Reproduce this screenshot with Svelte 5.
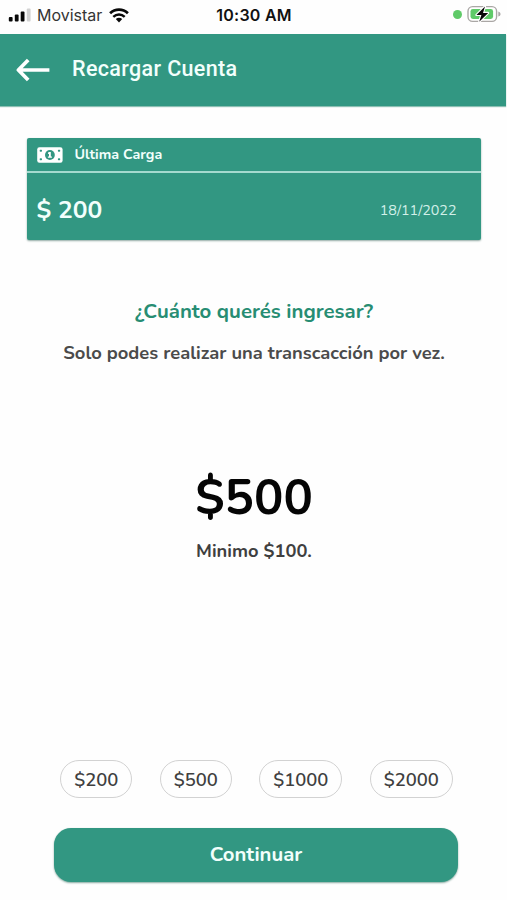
<script>
  const amounts = [
    { label: '$200', width: 72 },
    { label: '$500', width: 72 },
    { label: '$1000', width: 83 },
    { label: '$2000', width: 83 }
  ];
</script>

<div class="screen">
  <div class="status">
    <div class="carrier">
      <svg width="24" height="14" viewBox="0 0 24 14">
        <rect x="0.8" y="9" width="3.8" height="4.4" rx="1" fill="#080808" />
        <rect x="6.8" y="6.6" width="3.8" height="6.8" rx="1" fill="#080808" />
        <rect x="12.7" y="3.6" width="3.8" height="9.8" rx="1" fill="#080808" />
        <rect x="18.8" y="0.6" width="3.8" height="12.8" rx="1" fill="#d2d2d2" />
      </svg>
      <span class="name">Movistar</span>
      <svg class="wifi" width="20" height="15" viewBox="0 0 20 15" fill="none" stroke="#080808">
        <path d="M1.1 5.3C6.1.4 13.9.4 18.9 5.3" stroke-width="2.7" />
        <path d="M4.3 8.8C7.6 5.8 12.4 5.8 15.7 8.8" stroke-width="2.5" />
        <path d="M6.8 11.1Q10 8.6 13.2 11.1L10 14.4Z" fill="#080808" stroke="none" />
      </svg>
    </div>
    <span class="time">10:30 AM</span>
    <div class="power">
      <i class="dot"></i>
      <svg width="34" height="20" viewBox="0 0 34 20">
        <rect x="1" y="2.6" width="28.6" height="14.8" rx="4.6" fill="#fff" stroke="#aaa7a5" stroke-width="1.4" />
        <path d="M31.3 7.4Q33.6 8 33.6 10T31.3 12.6Z" fill="#aaa7a5" />
        <rect x="3.5" y="5" width="22.6" height="10" rx="2.4" fill="#5fca68" />
        <path d="M18 2.4 9.4 11H14.4L12.2 17.8 21.2 8.9H16Z" fill="#080808" stroke="#fff" stroke-width="2.2" stroke-linejoin="round" paint-order="stroke" />
      </svg>
    </div>
  </div>

  <header>
    <svg width="34" height="24" viewBox="0 0 34 24" fill="none" stroke="#fff" stroke-width="3.7" stroke-linejoin="round">
      <path d="M33.4 12H3M12.2 2 2.4 12 12.2 22" />
    </svg>
    <h1>Recargar Cuenta</h1>
  </header>

  <section class="card">
    <div class="card-head">
      <svg width="26" height="16" viewBox="0 0 26 16">
        <rect x="0.2" y="0.2" width="25.4" height="15.6" rx="2.2" fill="#fff" />
        <ellipse cx="12.9" cy="8" rx="4.9" ry="5" fill="#329782" />
        <path d="M12 5h1.8v4.4h1.1v1.4h-4V9.4H12V6.9h-.9V5.6Z" fill="#fff" />
        <g fill="#329782">
          <rect x="2.7" y="2.7" width="2.3" height="2.1" rx="0.7" />
          <rect x="20.9" y="2.7" width="2.3" height="2.1" rx="0.7" />
          <rect x="2.7" y="11.2" width="2.3" height="2.1" rx="0.7" />
          <rect x="20.9" y="11.2" width="2.3" height="2.1" rx="0.7" />
        </g>
      </svg>
      <span>Última Carga</span>
    </div>
    <div class="card-body">
      <strong>$ 200</strong>
      <time>18/11/2022</time>
    </div>
  </section>

  <h2>¿Cuánto querés ingresar?</h2>
  <p class="note">Solo podes realizar una transcacción por vez.</p>

  <div class="amount">$500</div>
  <p class="minimum">Minimo $100.</p>

  <div class="chips">
    {#each amounts as amount}
      <button class="chip" style="width: {amount.width}px">{amount.label}</button>
    {/each}
  </div>

  <button class="continue">Continuar</button>
</div>

<style>
  :global(body) {
    background: #fefefe;
  }
  .screen {
    width: 507px;
    height: 900px;
    overflow: hidden;
    display: flex;
    flex-direction: column;
    align-items: center;
    box-sizing: border-box;
    font-family: Nunito, 'Open Sans', 'Noto Sans', sans-serif;
    background: #fefefe;
  }
  h1, h2, p { margin: 0; }
  button { font-family: inherit; padding: 0; }
  svg { display: block; flex: none; }
  h1, h2, p, span, strong, time, button, .amount { white-space: nowrap; }
  .status {
    width: 507px;
    height: 34px;
    flex: none;
    display: grid;
    grid-template-columns: 1fr auto 1fr;
    box-sizing: border-box;
    padding: 0 7px 4px 8px;
    align-items: center;
    font-family: Inter, sans-serif;
    font-size: 16px;
    color: #111;
  }
  .carrier { display: flex; align-items: center; }
  .name { margin-left: 5px; color: #343434; }
  .wifi { margin-left: 7px; }
  .time { font-weight: 600; letter-spacing: 0.25px; }
  .power { display: flex; align-items: center; justify-content: flex-end; gap: 5px; margin: -2px -1px 0 0; }
  .dot { width: 9px; height: 9px; border-radius: 50%; background: #5fca68; }
  header {
    width: 506px;
    align-self: flex-start;
    height: 72px;
    flex: none;
    display: flex;
    align-items: center;
    box-sizing: border-box;
    padding-left: 16px;
    background: #329782;
    box-shadow: 0 1px 1px #8cbfb3;
  }
  h1 {
    margin: -3px 0 0 22px;
    font: 500 21.5px Roboto, sans-serif;
    letter-spacing: 0.35px;
    color: #f2fffc;
  }
  .card {
    width: 454px;
    height: 102px;
    flex: none;
    margin-top: 32px;
    border-radius: 2px;
    background: #329782;
    box-shadow: 0 1px 2px #91aaa4;
    color: #f2fffc;
  }
  .card-head {
    height: 35px;
    box-sizing: border-box;
    border-bottom: 2px solid #a5dacf;
    display: flex;
    align-items: center;
    gap: 12px;
    padding: 1px 0 0 10px;
    font-size: 14.3px;
    font-weight: 700;
  }
  .card-head span { margin-top: -1px; }
  .card-body {
    height: 67px;
    display: flex;
    align-items: center;
    justify-content: space-between;
    padding: 0 24px 0 10px;
    margin-top: 4px;
  }
  strong { font-size: 24.6px; font-weight: 700; margin-top: -2px; }
  time { font-size: 14.3px; color: #d2f0e9; }
  h2 {
    margin: 57px 0 0 1px;
    font-size: 20.4px;
    font-weight: 700;
    line-height: 28px;
    color: #278d73;
  }
  .note {
    margin: 16px 0 0 1px;
    font-size: 18.35px;
    font-weight: 700;
    line-height: 24px;
    color: #4b4b4b;
  }
  .amount {
    margin: 101px 0 0 1px;
    height: 64px;
    line-height: 64px;
    font-size: 49px;
    font-weight: 700;
    color: #050505;
  }
  .minimum {
    margin: 9px 0 0 1px;
    font-size: 18.3px;
    font-weight: 700;
    line-height: 24px;
    color: #3f3f3f;
  }
  .chips {
    display: flex;
    gap: 27.5px;
    margin: 197px 0 0 6px;
  }
  .chip {
    height: 38px;
    box-sizing: border-box;
    border: 1.3px solid #d2d2d2;
    border-radius: 19px;
    background: #fefefe;
    color: #3f3f3f;
    font-size: 18.4px;
    font-weight: 600;
  }
  .continue {
    width: 404px;
    height: 54px;
    flex: none;
    margin: 30px 0 0 5px;
    border: 0;
    border-radius: 17px;
    background: #329782;
    box-shadow: 0 1px 2px #84a89f;
    color: #f2fffc;
    font-size: 20.3px;
    font-weight: 700;
    padding-bottom: 2px;
  }
</style>
